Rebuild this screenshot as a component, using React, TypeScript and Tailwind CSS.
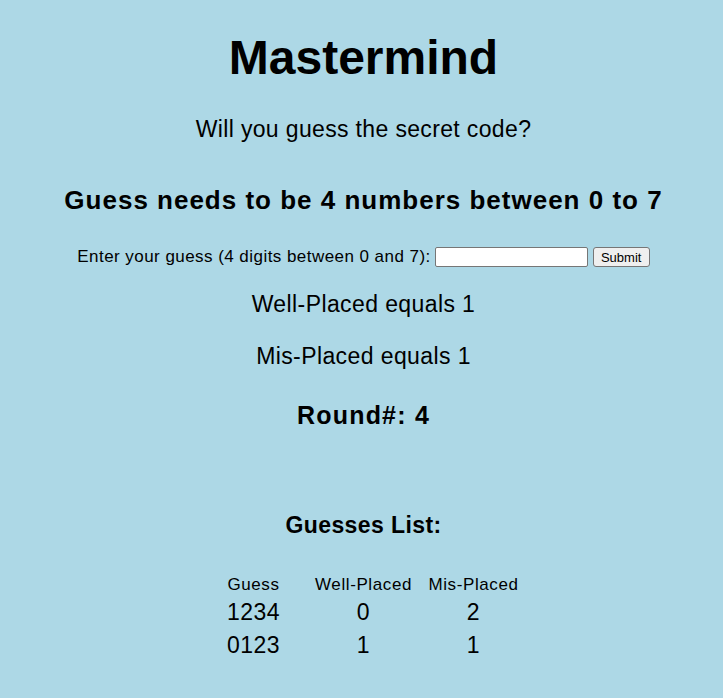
import React from 'react';

const guesses = [
  { guess: '1234', well: 0, mis: 2 },
  { guess: '0123', well: 1, mis: 1 },
];

export default function App() {
  return (
    <div className="min-h-[698px] bg-[#add8e6] text-black text-center font-['Liberation_Sans',Arial,sans-serif] pt-[21px] pl-[4px]">
      <h1 className="text-[48px] font-bold leading-[74px]">Mastermind</h1>
      <p className="text-[23px] tracking-[0.35px] mt-[22px] leading-[25px]">Will you guess the secret code?</p>
      <h2 className="text-[26px] tracking-[1px] font-bold mt-[43px] leading-[30px]">
        Guess needs to be 4 numbers between 0 to 7
      </h2>

      <form className="mt-[29px] flex justify-center items-center" onSubmit={(e) => e.preventDefault()}>
        <label className="text-[17px] tracking-[0.45px]">Enter your guess (4 digits between 0 and 7):</label>
        <input
          type="text"
          className="ml-[4px] w-[153px] h-[20px] bg-white border border-[#767676] rounded-[2px]"
        />
        <button
          type="submit"
          className="ml-[5px] w-[57px] h-[20px] text-[13px] bg-[#efefef] border border-[#767676] rounded-[3px]"
        >
          Submit
        </button>
      </form>

      <p className="text-[23px] tracking-[0.4px] mt-[22px] leading-[25px]">Well-Placed equals 1</p>
      <p className="text-[23px] tracking-[0.4px] mt-[27px] leading-[25px]">Mis-Placed equals 1</p>
      <h3 className="text-[25px] tracking-[1.2px] font-bold mt-[32px] leading-[28px]">Round#: 4</h3>

      <h4 className="text-[23px] tracking-[0.4px] font-bold mt-[84px] leading-[24px]">Guesses List:</h4>

      <table className="mx-auto mt-[35px] border-separate border-spacing-[2px]">
        <thead>
          <tr className="text-[17px] tracking-[0.6px]">
            <th className="font-normal w-[108px] leading-[21px]">Guess</th>
            <th className="font-normal w-[108px] leading-[21px]">Well-Placed</th>
            <th className="font-normal w-[108px] leading-[21px]">Mis-Placed</th>
          </tr>
        </thead>
        <tbody>
          {guesses.map((g) => (
            <tr key={g.guess} className="text-[23px] tracking-[0.5px]">
              <td className="leading-[31px]">{g.guess}</td>
              <td className="leading-[31px]">{g.well}</td>
              <td className="leading-[31px]">{g.mis}</td>
            </tr>
          ))}
        </tbody>
      </table>
    </div>
  );
}
